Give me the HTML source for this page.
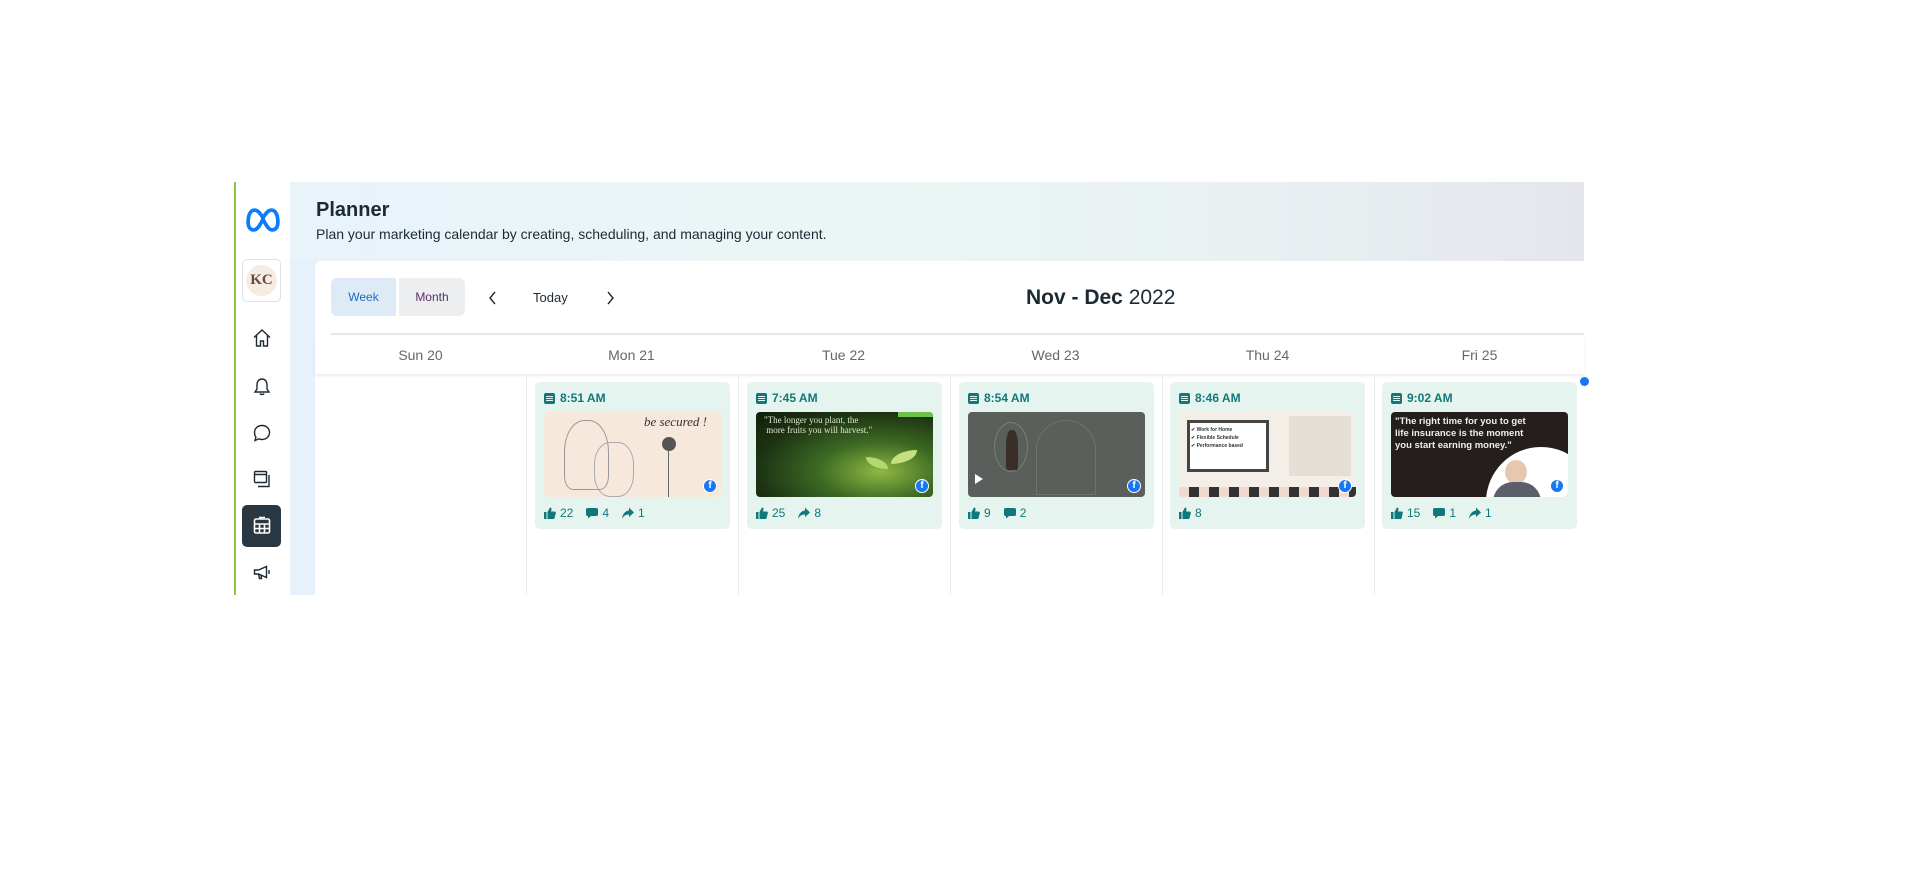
<!DOCTYPE html>
<html><head><meta charset="utf-8">
<style>
*{margin:0;padding:0;box-sizing:border-box}
body{width:1914px;height:885px;background:#fff;position:relative;overflow:hidden;font-family:"Liberation Sans",sans-serif;color:#1c2b33}
.abs{position:absolute}
#gl{left:234px;top:182px;width:1.5px;height:413px;background:#8dc63f}
#side{left:236px;top:182px;width:54px;height:413px;background:#fff}
#content{left:290px;top:182px;width:1294px;height:413px;background:linear-gradient(90deg,#e6f1fb 0%,#eaf5f5 40%,#e8eef1 80%,#e6e8ee 100%)}
#hdr{left:290px;top:182px;width:1294px;height:79px;background:linear-gradient(90deg,#e8f3fa 0%,#eaf6f5 45%,#e9f0f2 75%,#e4e6ec 100%)}
#title{left:316px;top:199px;font-size:20px;font-weight:bold;color:#1c2b33}
#sub{left:316px;top:226px;font-size:14px;color:#1c2b33}
#card{left:315px;top:261px;width:1269px;height:334px;background:#fff;border-radius:6px 0 0 0}
.btn{top:278px;height:38px;font-size:12px;line-height:38px;text-align:center;border-radius:6px}
#week{left:331px;width:65px;background:#deebf7;color:#1a6dbd;border-radius:6px 0 0 6px}
#month{left:399px;width:66px;background:#eceef0;color:#5a2e6b;border-radius:0 6px 6px 0}
#today{left:533px;top:290px;font-size:13px;color:#1c2b33}
#range{left:1026px;top:286px;font-size:21px;color:#1c2b33;white-space:nowrap}
#div{left:331px;top:333px;width:1253px;height:2px;background:#e4e6ea}
#dh{left:315px;top:335px;width:1269px;height:39px;background:#fff;box-shadow:0 2px 3px rgba(0,0,0,.08)}
.day{top:347px;font-size:14px;color:#65676b;width:211px;text-align:center}
.vl{top:374px;width:1px;height:221px;background:#e9ebee}
.pc{top:382px;width:195px;height:147px;background:#e6f4ef;border-radius:5px}
.tm{position:absolute;left:9px;top:9px;font-size:12px;font-weight:bold;color:#10787a;display:flex;align-items:center;gap:5px}
.doc{width:11px;height:11px;background:#10787a;border-radius:2px;position:relative}
.doc:before{content:"";position:absolute;left:2px;top:3px;width:7px;height:1px;background:#e6f4ef;box-shadow:0 2px 0 #e6f4ef,0 4px 0 #e6f4ef}
.img{position:absolute;left:9px;top:30px;width:177px;height:85px;border-radius:4px;overflow:hidden}
.fb{position:absolute;right:4px;bottom:4px;width:14px;height:14px;border-radius:50%;background:#1877f2;border:1.5px solid #fff;color:#fff;font-size:10px;font-weight:bold;line-height:12px;text-align:center}
.st{position:absolute;left:9px;top:124px;font-size:12px;color:#10787a;display:flex;align-items:center;gap:4px}
.st svg{fill:#10787a}
.st span{margin-right:9px}
</style></head><body>
<div id="gl" class="abs"></div>
<div id="side" class="abs"></div>
<div id="content" class="abs"></div>
<div id="hdr" class="abs"></div>

<svg class="abs" style="left:246px;top:207px" width="34" height="26" viewBox="0 0 24 18"><path d="M6 2C2.5 2 1.5 7 1.5 10.5 1.5 14 3 16 5.5 16 8.5 16 10.5 11 12 8.5 13.5 11 15.5 16 18.5 16 21 16 22.5 14 22.5 10.5 22.5 7 21.5 2 18 2 15.5 2 13.5 5 12 7.5 10.5 5 8.5 2 6 2Z" fill="none" stroke="#0a7cff" stroke-width="2.6"/></svg>
<div class="abs" style="left:242px;top:259px;width:39px;height:43px;border:1px solid #dfe1e5;border-radius:5px;background:#fff"></div>
<div class="abs" style="left:246px;top:265px;width:31px;height:31px;border-radius:50%;background:#f6ece1;font:bold 15px 'Liberation Serif',serif;color:#6b4a3a;text-align:center;line-height:31px">KC</div>
<svg class="abs" style="left:252px;top:328px" width="20" height="20" viewBox="0 0 20 20" fill="none" stroke="#1c2b33" stroke-width="1.4"><path d="M2 9.5 10 2l8 7.5M4.5 7.5V18h4v-5h3v5h4V7.5"/></svg>
<svg class="abs" style="left:252px;top:377px" width="20" height="20" viewBox="0 0 20 20" fill="none" stroke="#1c2b33" stroke-width="1.4"><path d="M10 2c-3 0-5 2.5-5 5.5V12l-2 3h14l-2-3V7.5C15 4.5 13 2 10 2ZM8 16.5c.5 1.3 3.5 1.3 4 0"/></svg>
<svg class="abs" style="left:252px;top:423px" width="20" height="20" viewBox="0 0 20 20" fill="none" stroke="#1c2b33" stroke-width="1.4"><path d="M10 2.5c4.4 0 7.5 3 7.5 7s-3.1 7-7.5 7c-1.2 0-2.3-.2-3.3-.6L3 17.5l.9-3.3C3 12.9 2.5 11.3 2.5 9.5c0-4 3.1-7 7.5-7Z"/></svg>
<svg class="abs" style="left:252px;top:469px" width="20" height="20" viewBox="0 0 20 20" fill="none" stroke="#1c2b33" stroke-width="1.4"><rect x="2.5" y="2.5" width="12" height="11" rx="1"/><path d="M2.5 5.5h12M17 6v11.5H6"/></svg>
<div class="abs" style="left:242px;top:505px;width:39px;height:42px;background:#283742;border-radius:5px"></div>
<svg class="abs" style="left:252px;top:516px" width="20" height="20" viewBox="0 0 20 20" fill="none" stroke="#fff" stroke-width="1.6"><rect x="2.5" y="3" width="15" height="14" rx="1.5"/><path d="M2.5 8h15M2.5 12.5h15M7.5 8v9M12.5 8v9M7 1.5h6"/></svg>
<svg class="abs" style="left:252px;top:562px" width="20" height="20" viewBox="0 0 20 20" fill="none" stroke="#1c2b33" stroke-width="1.4"><path d="M2.5 8v4h4l8 3.5V4.5L6.5 8h-4ZM6.5 12l1 4.5h2l-.5-4M17 8v4"/></svg>

<div id="title" class="abs">Planner</div>
<div id="sub" class="abs">Plan your marketing calendar by creating, scheduling, and managing your content.</div>

<div id="card" class="abs"></div>
<div id="week" class="abs btn">Week</div>
<div id="month" class="abs btn">Month</div>
<svg class="abs" style="left:488px;top:291px" width="10" height="14" viewBox="0 0 10 14" fill="none" stroke="#1c2b33" stroke-width="1.4"><path d="M7 1 2 7l5 6"/></svg>
<div id="today" class="abs">Today</div>
<svg class="abs" style="left:605px;top:291px" width="10" height="14" viewBox="0 0 10 14" fill="none" stroke="#1c2b33" stroke-width="1.4"><path d="M3 1l5 6-5 6"/></svg>
<div id="range" class="abs"><b>Nov - Dec</b> 2022</div>
<div id="div" class="abs"></div>
<div id="dh" class="abs"></div>
<div class="abs day" style="left:315px">Sun 20</div>
<div class="abs day" style="left:526px">Mon 21</div>
<div class="abs day" style="left:738px">Tue 22</div>
<div class="abs day" style="left:950px">Wed 23</div>
<div class="abs day" style="left:1162px">Thu 24</div>
<div class="abs day" style="left:1374px">Fri 25</div>
<div class="abs vl" style="left:526px"></div>
<div class="abs vl" style="left:738px"></div>
<div class="abs vl" style="left:950px"></div>
<div class="abs vl" style="left:1162px"></div>
<div class="abs vl" style="left:1374px"></div>
<div class="abs" style="left:1580px;top:377px;width:9px;height:9px;border-radius:50%;background:#1877f2"></div>

<svg width="0" height="0" style="position:absolute"><defs>
<symbol id="lk" viewBox="0 0 12 12"><path d="M0 5h2.5v7H0zM3.5 5 6 .5c1 0 1.7.7 1.5 1.8L7 4.5h3.5c.9 0 1.5.8 1.3 1.6l-1.2 5c-.2.6-.7.9-1.300.9H3.5z"/></symbol>
<symbol id="cm" viewBox="0 0 12 12"><path d="M1.5 1h9c.8 0 1.5.7 1.5 1.5v5c0 .8-.7 1.5-1.5 1.5H5l-3 2.5V9h-.5C.7 9 0 8.3 0 7.5v-5C0 1.7.7 1 1.5 1z"/></symbol>
<symbol id="sh" viewBox="0 0 12 12"><path d="M7 .5 12 5.5 7 10V7.5C3.5 7.5 1.5 9 0 12 .5 7 3 4 7 3.5z"/></symbol>
</defs></svg>

<div class="abs pc" style="left:535px">
 <div class="tm"><div class="doc"></div>8:51 AM</div>
 <div class="img" style="background:#f6e9dc">
  <div style="position:absolute;right:14px;top:2px;font:italic 13px 'Liberation Serif',serif;color:#333">be secured !</div>
  <div style="position:absolute;left:20px;top:8px;width:45px;height:70px;border:1px solid #999;border-radius:45% 45% 20% 20%"></div>
  <div style="position:absolute;left:50px;top:30px;width:40px;height:55px;border:1px solid #aaa;border-radius:40%"></div>
  <div style="position:absolute;left:118px;top:25px;width:14px;height:14px;border-radius:50%;background:#555"></div>
  <div style="position:absolute;left:124px;top:38px;width:1px;height:47px;background:#666"></div>
  <div class="fb">f</div></div>
 <div class="st"><svg width="12" height="12"><use href="#lk"/></svg><span>22</span><svg width="12" height="12"><use href="#cm"/></svg><span>4</span><svg width="12" height="12"><use href="#sh"/></svg><span>1</span></div>
</div>
<div class="abs pc" style="left:747px">
 <div class="tm"><div class="doc"></div>7:45 AM</div>
 <div class="img" style="background:radial-gradient(ellipse at 70% 70%,#8fb945 0%,#3d6a23 35%,#1c3312 70%,#0f1f0b 100%)">
  <div style="position:absolute;left:8px;top:3px;font:9px 'Liberation Serif',serif;color:#dfe6d0;line-height:10px">"The longer you plant, the<br>&nbsp;more fruits you will harvest."</div>
  <div style="position:absolute;right:0;top:0;width:35px;height:5px;background:#6cc24a"></div>
  <div style="position:absolute;left:110px;top:45px;width:22px;height:12px;background:#b6d873;border-radius:0 100% 0 100%"></div>
  <div style="position:absolute;left:135px;top:38px;width:26px;height:14px;background:#c7e07e;border-radius:100% 0 100% 0"></div>
  <div class="fb">f</div></div>
 <div class="st"><svg width="12" height="12"><use href="#lk"/></svg><span>25</span><svg width="12" height="12"><use href="#sh"/></svg><span>8</span></div>
</div>
<div class="abs pc" style="left:959px">
 <div class="tm"><div class="doc"></div>8:54 AM</div>
 <div class="img" style="background:#5b5f5c">
  <div style="position:absolute;left:26px;top:10px;width:34px;height:50px;border:1px solid #7a7e7a;border-radius:50%"></div>
  <div style="position:absolute;left:38px;top:18px;width:12px;height:40px;background:#3a2e28;border-radius:40% 40% 10% 10%"></div>
  <div style="position:absolute;left:68px;top:8px;width:60px;height:75px;border:1px solid #6e726f;border-radius:30px 30px 0 0"></div>
  <div style="position:absolute;left:7px;top:62px;width:0;height:0;border-left:8px solid #fff;border-top:5px solid transparent;border-bottom:5px solid transparent"></div>
  <div class="fb">f</div></div>
 <div class="st"><svg width="12" height="12"><use href="#lk"/></svg><span>9</span><svg width="12" height="12"><use href="#cm"/></svg><span>2</span></div>
</div>
<div class="abs pc" style="left:1170px">
 <div class="tm"><div class="doc"></div>8:46 AM</div>
 <div class="img" style="background:#f3efe8">
  <div style="position:absolute;left:8px;top:8px;width:82px;height:52px;border:3px solid #444;background:#fff"></div>
  <div style="position:absolute;left:12px;top:14px;font:bold 5px sans-serif;color:#333;line-height:8px">✔ Work for Home<br>✔ Flexible Schedule<br>✔ Performance based</div>
  <div style="position:absolute;left:110px;top:4px;width:62px;height:60px;background:#e4dfd4"></div>
  <div style="position:absolute;left:0;bottom:0;width:177px;height:10px;background:repeating-linear-gradient(90deg,#f1d9d0 0 10px,#333 10px 20px)"></div>
  <div class="fb">f</div></div>
 <div class="st"><svg width="12" height="12"><use href="#lk"/></svg><span>8</span></div>
</div>
<div class="abs pc" style="left:1382px">
 <div class="tm"><div class="doc"></div>9:02 AM</div>
 <div class="img" style="background:#241e1d">
  <div style="position:absolute;left:4px;top:4px;font:bold 9.5px 'Liberation Sans',sans-serif;color:#eee;line-height:12px">"The right time for you to get<br>life insurance is the moment<br>you start earning money."</div>
  <div style="position:absolute;left:95px;top:35px;width:110px;height:110px;border-radius:50%;background:#fff"></div>
  <div style="position:absolute;left:114px;top:48px;width:22px;height:24px;border-radius:50%;background:#e8c7b0"></div>
  <div style="position:absolute;left:102px;top:70px;width:48px;height:20px;border-radius:20px 20px 0 0;background:#5a5f6a"></div>
  <div class="fb">f</div></div>
 <div class="st"><svg width="12" height="12"><use href="#lk"/></svg><span>15</span><svg width="12" height="12"><use href="#cm"/></svg><span>1</span><svg width="12" height="12"><use href="#sh"/></svg><span>1</span></div>
</div>
</body></html>
